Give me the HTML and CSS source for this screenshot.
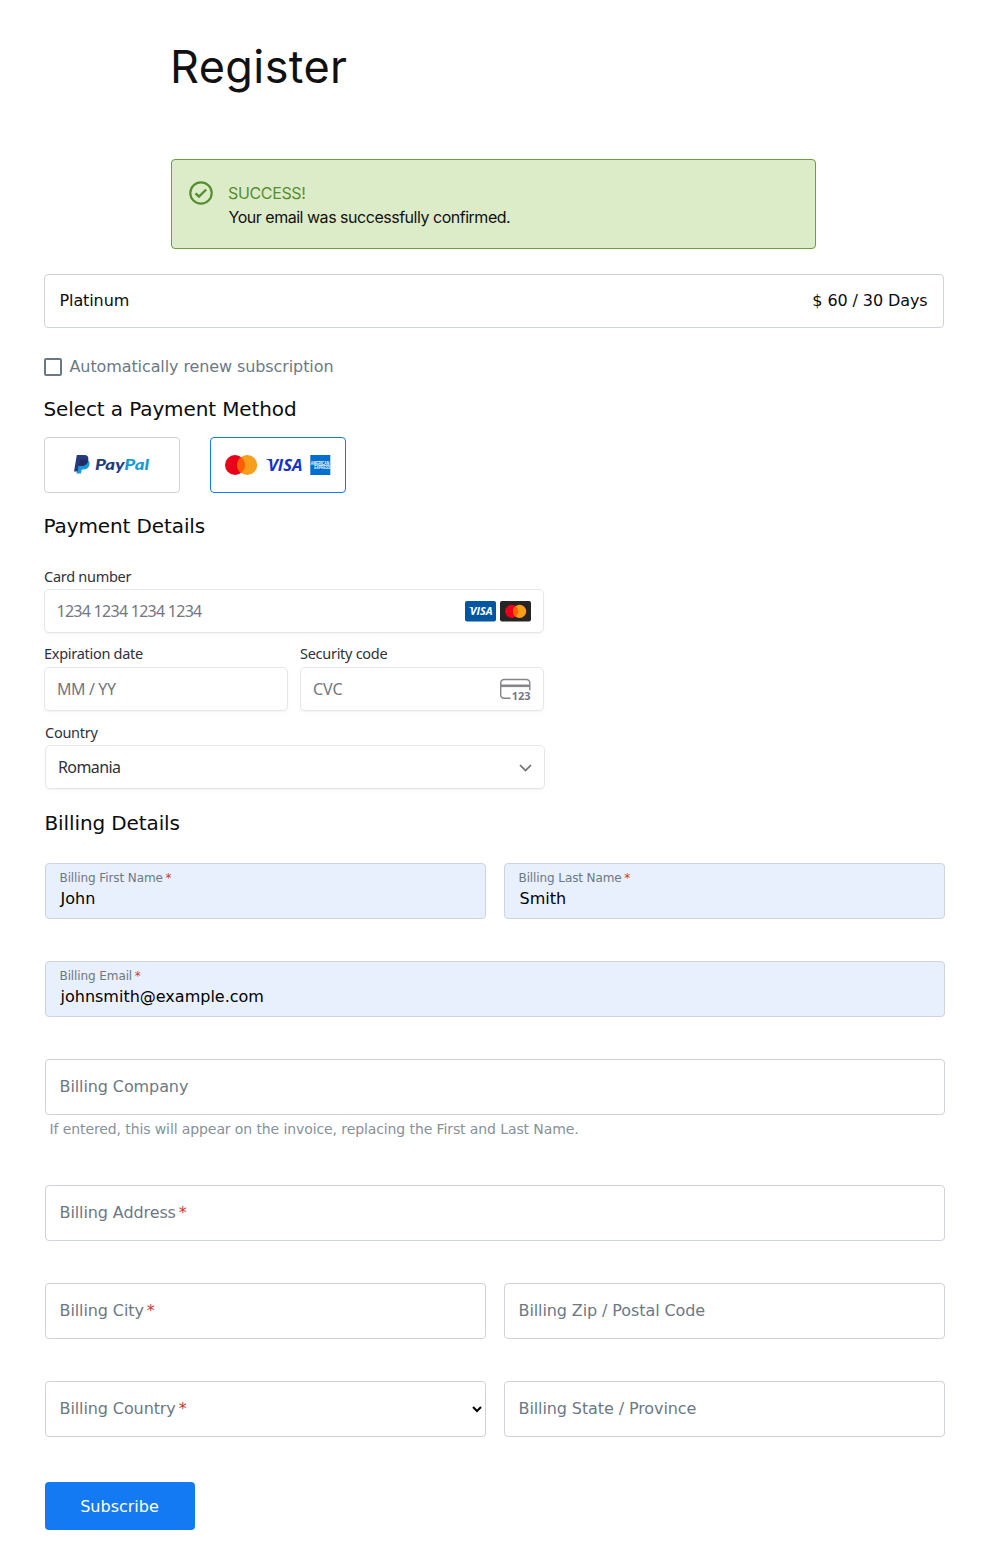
FILE: index.html
```html
<!DOCTYPE html>
<html lang="en">
<head>
<meta charset="utf-8">
<title>Register</title>
<link rel="stylesheet" href="styles.css">
</head>
<body>
<main class="page">
  <h1 class="title"><span>Register</span></h1>
  <div class="alert">
    <svg class="alert-icon" width="24" height="24" viewBox="0 0 24 24" fill="none" stroke="#568f2f" stroke-width="2.2"><circle cx="12" cy="12" r="10.7"/><path d="M6.500 12.300l3.500 3.200 7.200-7" stroke-width="2.4"/></svg>
    <div class="alert-body">
      <div class="alert-title"><span>SUCCESS!</span></div>
      <div class="alert-text"><span>Your email was successfully confirmed.</span></div>
    </div>
  </div>
  <div class="plan"><span>Platinum</span><span>$ 60 / 30 Days</span></div>
  <label class="renew"><span class="box"></span><span>Automatically renew subscription</span></label>
  <h2 class="section method-title">Select a Payment Method</h2>
  <div class="methods">
    <button class="method" aria-label="PayPal">
      <svg width="136" height="56" viewBox="0 0 136 56">
        <path d="M36 23.500h8.500q1.600 1.500.9 4.500-1.200 4.600-6.400 4.600h-1.300l-.7 4h-4.600z" fill="#179bd7"/>
        <path d="M32.800 18h7.200q5.300 0 4.200 5.400Q43 29 36.500 29h-1.900l-.9 5.500H30z" fill="#253b80"/>
        <path d="M36 22.500h6.500l1.700.9Q43 29 36.500 29h-1.600z" fill="#222d65"/>
        <text x="51" y="33.300" class="pp" textLength="54" lengthAdjust="spacingAndGlyphs"><tspan fill="#253b80">Pay</tspan><tspan fill="#179bd7">Pal</tspan></text>
      </svg>
    </button>
    <button class="method selected" aria-label="Cards">
      <svg width="136" height="56" viewBox="0 0 136 56">
        <circle cx="25" cy="28" r="10" fill="#eb001b"/><circle cx="37.200" cy="28" r="10" fill="#f79e1b"/>
        <path d="M31.100 20a10 10 0 0 1 0 16 10 10 0 0 1 0-16z" fill="#ff5f00"/>
        <text x="58" y="34" class="visa" fill="#1434cb" font-size="16.600" textLength="34.500" lengthAdjust="spacingAndGlyphs">VISA</text>
        <path d="M55.500 22h5l1.500 4q-2.500-3-6.500-4z" fill="#1434cb"/>
        <rect x="100.300" y="18" width="20" height="20" fill="#016fd0"/>
        <g class="amex" fill="#fff"><text x="100.800" y="27.600" textLength="18.500" lengthAdjust="spacingAndGlyphs">AMERICAN</text><text x="104.300" y="32" textLength="16" lengthAdjust="spacingAndGlyphs">EXPRESS</text></g>
      </svg>
    </button>
  </div>
  <h2 class="section details-title">Payment Details</h2>
  <div class="card-form">
    <div class="card-label"><span>Card number</span></div>
    <div class="card-input"><span class="ph number">1234 1234 1234 1234</span>
      <svg class="brands" width="66" height="21" viewBox="0 0 66 21">
        <rect width="31" height="20.500" rx="2" fill="#00579f"/>
        <text x="5" y="14.200" class="visa" fill="#fff" font-size="10.800" textLength="22.500" lengthAdjust="spacingAndGlyphs">VISA</text><path d="M3.500 6.300H7l1 2.500q-1.500-2-4.500-2.500z" fill="#fff"/>
        <rect x="35" width="31" height="20.500" rx="2" fill="#252525"/>
        <circle cx="46.700" cy="10.300" r="6.600" fill="#eb001b"/><circle cx="54.600" cy="10.300" r="6.600" fill="#f79e1b"/><path d="M50.650 5a6.600 6.600 0 0 1 0 10.600 6.600 6.600 0 0 1 0-10.600z" fill="#ff5f00"/>
      </svg>
    </div>
    <div class="pair">
      <div><div class="card-label raised"><span>Expiration date</span></div><div class="card-input"><span class="ph expiry">MM / YY</span></div></div>
      <div><div class="card-label raised"><span>Security code</span></div><div class="card-input"><span class="ph">CVC</span>
        <svg class="cvc" width="31" height="30" viewBox="0 -3 31 30" fill="none" stroke="#85858c" stroke-width="1.400"><path d="M10.500 21.300H4A3.300 3.300 0 0 1 .7 18V5.800A3.300 3.300 0 0 1 4 2.500h22.500A3.300 3.300 0 0 1 29.800 5.800v7.500"/><path d="M1 8.800h29" stroke-width="2.600"/><text x="11.700" y="22.600" textLength="18.800" lengthAdjust="spacingAndGlyphs" class="cvc-text">123</text></svg>
      </div></div>
    </div>
    <div class="country">
      <div class="card-label"><span>Country</span></div>
      <div class="card-input"><span class="value">Romania</span><svg class="chev" width="13" height="8" viewBox="0 0 13 8" fill="none" stroke="#6d6e78" stroke-width="1.700"><path d="M1 1l5.500 5.500L12 1"/></svg></div>
    </div>
  </div>
  <h2 class="section billing-title">Billing Details</h2>
  <div class="billing">
    <div class="field filled"><span class="mini">Billing First Name<b> *</b></span><span class="typed">John</span></div>
    <div class="field filled"><span class="mini">Billing Last Name<b> *</b></span><span class="typed">Smith</span></div>
    <div class="field filled wide"><span class="mini">Billing Email<b> *</b></span><span class="typed">johnsmith@example.com</span></div>
    <div class="wide company"><div class="field">Billing Company</div><div class="note">If entered, this will appear on the invoice, replacing the First and Last Name.</div></div>
    <div class="field wide"><span>Billing Address<b> *</b></span></div>
    <div class="field"><span>Billing City<b> *</b></span></div>
    <div class="field">Billing Zip / Postal Code</div>
    <div class="field select"><span>Billing Country<b> *</b></span><svg width="10" height="7" viewBox="0 0 10 7" fill="none" stroke="#000" stroke-width="2"><path d="M1 1l4 4 4-4"/></svg></div>
    <div class="field">Billing State / Province</div>
  </div>
  <button class="submit">Subscribe</button>
</main>
</body>
</html>
```
FILE: styles.css
```css
* { box-sizing: border-box; }
body { margin: 0; background: #fff; color: #0b0c0d; font: 16px/24px "DejaVu Sans", sans-serif; }
button { font: inherit; padding: 0; margin: 0; }
svg { display: block; flex: none; }
.page { width: 901px; margin-left: 44px; padding-top: 35px; height: 1558px; }
.title { margin: 0 0 60px 126px; height: 64px; font: 400 45px/64px Inter, sans-serif; letter-spacing: .4px; color: #111; white-space: nowrap; }
.alert { margin-left: 127px; width: 645px; height: 90px; border: 1px solid #68a13b; border-radius: 4px; background: #ddecc8; display: flex; gap: 15px; padding: 21px 17px; font: 16px/24px Inter, sans-serif; white-space: nowrap; }
.alert-title { color: #568f2f; letter-spacing: -.35px; }
.alert-text { color: #111; letter-spacing: -.48px; margin-left: .5px; }
.plan { margin-top: 25px; width: 900px; height: 54px; border: 1px solid #cfd3e0; border-radius: 4px; padding: 0 15.500px 0 14.500px; letter-spacing: -.1px; display: flex; align-items: center; justify-content: space-between; }
.renew { margin-top: 27px; height: 24px; display: flex; align-items: center; gap: 7.500px; color: #6c7985; letter-spacing: -.1px; }
.box { width: 18px; height: 18px; border: 2px solid #6c7985; border-radius: 2px; }
.section { margin: 0; font-size: 20px; line-height: 28px; height: 28px; font-weight: 400; letter-spacing: -.11px; text-indent: -.5px; }
.method-title { margin-top: 16px; }
.methods { margin-top: 14px; display: flex; gap: 30px; }
.method { width: 136px; height: 56px; border: 1px solid #cfd3e0; border-radius: 4px; background: #fff; }
.method svg { margin: -1px; }
.selected { border-color: #147af3; }
.pp { font: italic 900 15.500px Lato, sans-serif; }
.visa { font-family: "Open Sans", sans-serif; font-style: italic; font-weight: 700; }
.amex { font: 700 5px "Liberation Sans", sans-serif; }
.details-title { margin-top: 19px; }
.card-form { margin-top: 25px; width: 500px; font-family: "Noto Sans", sans-serif; color: #30313d; }
.card-label { height: 24px; font-size: 14.500px; line-height: 22px; letter-spacing: -.28px; white-space: nowrap; }
.raised { line-height: 20px; }
.card-input { height: 44px; border: 1px solid #e6e6e6; border-radius: 5px; box-shadow: 0 1px 1px rgba(0,0,0,.03), 0 3px 6px rgba(0,0,0,.02); padding: 0 12px; display: flex; justify-content: space-between; align-items: center; }
.ph { color: #757680; }
.number { letter-spacing: -.73px; margin-left: -.5px; }
.expiry { letter-spacing: -.4px; }
.value { letter-spacing: -.6px; }
.chev { margin-top: 2px; }
.pair { margin-top: 10px; display: grid; grid-template-columns: 244px 244px; gap: 12px; }
.country { margin: 10px -1px 0 1px; }
.cvc-text { fill: #77777e; stroke: none; font: 700 10.500px "Open Sans", sans-serif; }
.billing-title { margin: 20px 0 0 1px; }
.billing { margin: 26px 0 0 1px; width: 900px; display: grid; grid-template-columns: 441px 441px; column-gap: 18px; row-gap: 42px; }
.wide { grid-column: 1 / -1; }
.field { height: 56px; border: 1px solid #cfd3e0; border-radius: 4px; padding: 0 14px 0 13.500px; display: flex; align-items: center; color: #6c7985; letter-spacing: -.1px; }
.field b { font-weight: 400; color: #c93a35; margin-left: -2px; }
.filled { background: #e8effd; flex-direction: column; align-items: flex-start; padding-top: 6px; }
.mini { font-size: 12px; line-height: 16px; }
.filled b { margin-left: -1px; }
.typed { line-height: 24px; margin-top: 1px; color: #000; margin-left: 1px; letter-spacing: 0; }
.company { height: 84px; }
.note { margin: 4px 0 0 4.500px; font-size: 14px; line-height: 20px; color: #87919b; letter-spacing: -.1px; }
.select { justify-content: space-between; padding-right: 3px; }
.submit { display: block; margin: 45px 0 0 1px; width: 150px; height: 48px; border: 0; border-radius: 4px; background: #147af3; color: #fff; padding: 1px 1px 0 0; }
```
